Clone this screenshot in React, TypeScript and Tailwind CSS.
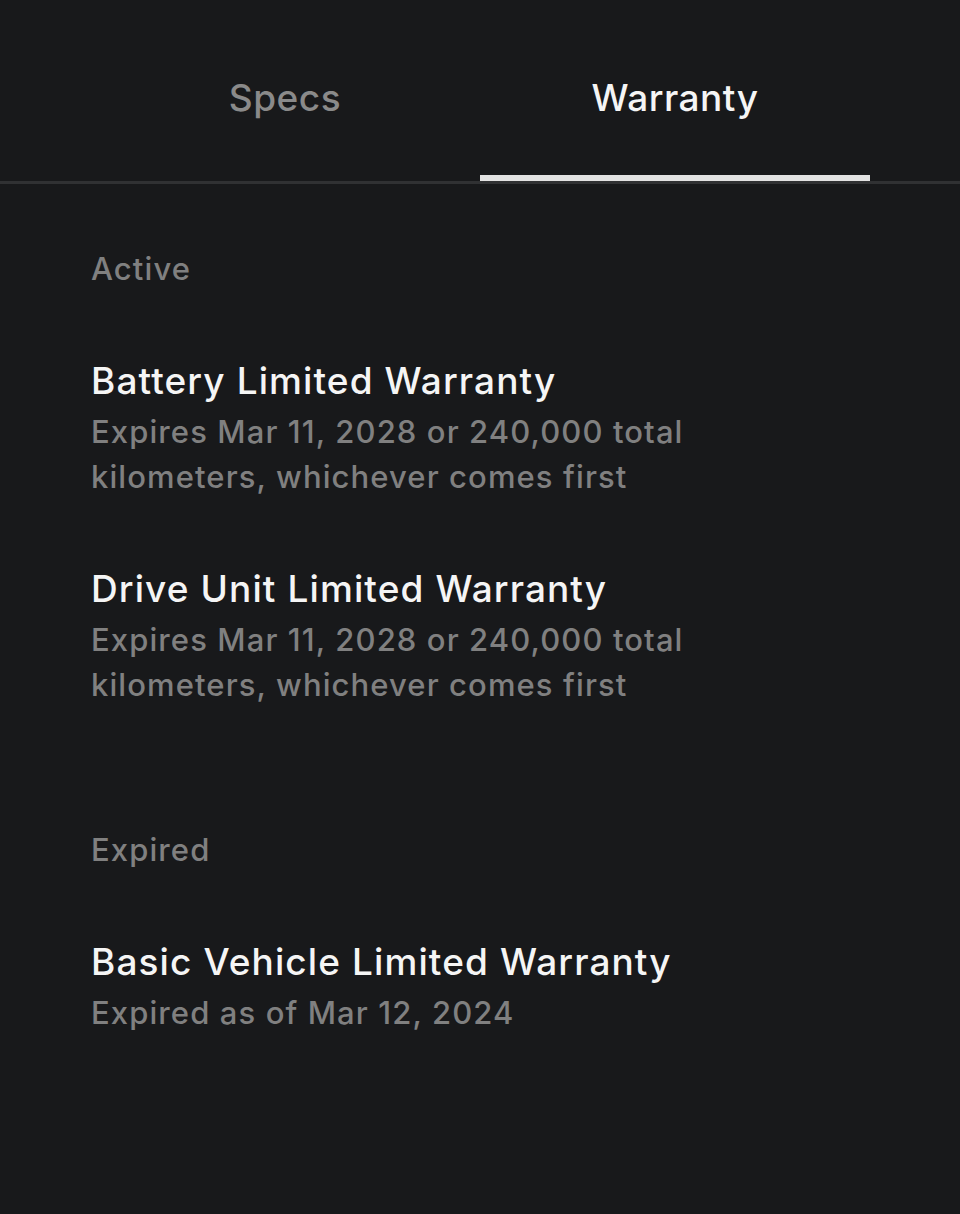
const sections = [
  {
    label: 'Active',
    items: [
      {
        title: 'Battery Limited Warranty',
        detail: 'Expires Mar 11, 2028 or 240,000 total kilometers, whichever comes first',
      },
      {
        title: 'Drive Unit Limited Warranty',
        detail: 'Expires Mar 11, 2028 or 240,000 total kilometers, whichever comes first',
      },
    ],
  },
  {
    label: 'Expired',
    items: [{ title: 'Basic Vehicle Limited Warranty', detail: 'Expired as of Mar 12, 2024' }],
  },
];

function Tab({ label, active }: { label: string; active?: boolean }) {
  return (
    <div className="flex flex-1 flex-col items-center">
      <span
        className={`mt-[74px] text-[37px] leading-[48px] font-medium tracking-[0.5px] ${
          active ? 'text-[#f5f5f5]' : 'text-[#8a8a8a]'
        }`}
      >
        {label}
      </span>
      <div className={`mt-[53px] h-[6px] w-full ${active ? 'bg-[#e2e2e2]' : 'bg-transparent'}`} />
    </div>
  );
}

export default function App() {
  return (
    <div
      className="min-h-[1214px] w-[960px] bg-[#18191b]"
      style={{ fontFamily: 'Inter, "Noto Sans", sans-serif' }}
    >
      {/* Tabs */}
      <div className="border-b-[3px] border-[#303133]">
        <div className="mx-[90px] flex">
          <Tab label="Specs" />
          <Tab label="Warranty" active />
        </div>
      </div>

      {/* Warranty list */}
      <div className="px-[91px] pt-[67px]">
        {sections.map((s, si) => (
          <div key={s.label} className={si > 0 ? 'mt-[125px]' : ''}>
            <div className="text-[31px] leading-[36px] font-medium tracking-[1.1px] text-[#808080]">
              {s.label}
            </div>
            <div className="mt-[70px] flex flex-col gap-[66px]">
              {s.items.map((it) => (
                <div key={it.title} className="max-w-[640px]">
                  <div className="text-[37px] leading-[48px] font-medium tracking-[1.1px] text-[#f5f5f5]">
                    {it.title}
                  </div>
                  <div className="mt-[4px] text-[31px] leading-[45px] font-medium tracking-[1.1px] text-[#808080]">
                    {it.detail}
                  </div>
                </div>
              ))}
            </div>
          </div>
        ))}
      </div>
    </div>
  );
}
